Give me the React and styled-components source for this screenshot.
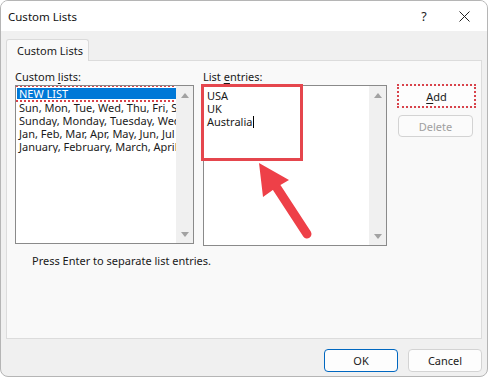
import React from "react";
import styled, { createGlobalStyle } from "styled-components";

const GlobalStyle = createGlobalStyle`
  html, body {
    margin: 0;
    padding: 0;
    background: #ffffff;
  }
  body {
    font-family: "Noto Sans", "Open Sans", sans-serif;
    font-size: 11px;
    color: #1a1a1a;
  }
`;

const Window = styled.div`
  position: relative;
  width: 488px;
  height: 377px;
  box-sizing: border-box;
  border: 1px solid #b5b5b5;
  border-radius: 8px;
  overflow: hidden;
  display: flex;
  flex-direction: column;
  background: #f0f0f0;
`;

const TitleBar = styled.div`
  height: 30px;
  flex: none;
  background: #ffffff;
  display: flex;
  align-items: center;
  padding: 0 0 0 7px;
`;

const Title = styled.div`
  flex: 1;
  font-size: 11.5px;
  color: #111;
`;

const TitleButton = styled.div`
  width: ${(p) => p.w}px;
  height: 30px;
  display: flex;
  align-items: center;
  justify-content: center;
  font-size: 12.5px;
  color: #222;
`;

const Body = styled.div`
  flex: 1;
  display: flex;
  flex-direction: column;
  padding: 8px 5px 0 5px;
`;

const TabStrip = styled.div`
  display: flex;
  height: 21px;
`;

const Tab = styled.div`
  box-sizing: border-box;
  width: 83px;
  height: 22px;
  padding: 3px 0 0 10px;
  background: #f9f9f9;
  border: 1px solid #dadada;
  border-bottom: none;
  border-radius: 3px 3px 0 0;
  position: relative;
  z-index: 1;
`;

const Panel = styled.div`
  box-sizing: border-box;
  height: 279px;
  background: #f9f9f9;
  border: 1px solid #dcdcdc;
  padding: 8px 0 0 8px;
  display: flex;
  flex-direction: column;
`;

const Columns = styled.div`
  display: flex;
  align-items: flex-start;
`;

const Column = styled.div`
  width: ${(p) => p.w}px;
  margin-right: ${(p) => p.gap || 0}px;
  display: flex;
  flex-direction: column;
`;

const Label = styled.div`
  height: 16px;
  line-height: 16px;
  color: #1a1a1a;
`;

const Underline = styled.span`
  text-decoration: underline;
  text-underline-offset: 2px;
`;

const ListBox = styled.div`
  position: relative;
  box-sizing: border-box;
  height: ${(p) => p.h}px;
  background: #ffffff;
  border: 1px solid #8a8a8a;
  display: flex;
`;

const ListContent = styled.div`
  flex: 1;
  min-width: 0;
  padding: ${(p) => p.pad};
  overflow: hidden;
`;

const Row = styled.div`
  height: 13px;
  line-height: 13px;
  white-space: nowrap;
  overflow: hidden;
  padding-left: 2px;
  color: ${(p) => (p.selected ? "#ffffff" : "#1a1a1a")};
  background: ${(p) => (p.selected ? "#0078d7" : "transparent")};
  position: relative;
`;

const SelectedRow = styled(Row)`
  overflow: visible;
  height: 11px;
  line-height: 11px;
  margin-bottom: 2px;
  &::after {
    content: "";
    position: absolute;
    left: -5px;
    right: -2px;
    top: -3px;
    bottom: -3px;
    border: 2px dotted #d8434b;
  }
`;

const EntryRow = styled.div`
  height: 13px;
  line-height: 13px;
  display: flex;
  align-items: center;
`;

const Caret = styled.span`
  display: inline-block;
  width: 1px;
  height: 12px;
  background: #000;
  margin-left: 1px;
`;

const Scrollbar = styled.div`
  width: 17px;
  flex: none;
  background: #f0f0f0;
  display: flex;
  flex-direction: column;
  justify-content: space-between;
  align-items: center;
  padding: 7px 0 6px;
`;

const ArrowUp = styled.div`
  width: 0;
  height: 0;
  border-left: 4px solid transparent;
  border-right: 4px solid transparent;
  border-bottom: 5px solid #a2a2a2;
`;

const ArrowDown = styled.div`
  width: 0;
  height: 0;
  border-left: 4px solid transparent;
  border-right: 4px solid transparent;
  border-top: 5px solid #a2a2a2;
`;

const Highlight = styled.div`
  position: absolute;
  left: -3px;
  top: -2px;
  width: 102px;
  height: 77px;
  box-sizing: border-box;
  border: 3px solid #e5464d;
  pointer-events: none;
`;

const ButtonStack = styled.div`
  display: flex;
  flex-direction: column;
  gap: 7px;
  padding-top: 15px;
`;

const DottedFrame = styled.div`
  box-sizing: border-box;
  width: 79px;
  height: 24px;
  border: 2px dotted #d8434b;
  display: flex;
`;

const Button = styled.button`
  box-sizing: border-box;
  width: ${(p) => p.w}px;
  height: ${(p) => p.h}px;
  margin-left: ${(p) => p.ml || 0}px;
  font-family: inherit;
  font-size: 11px;
  border-radius: 4px;
  padding: 0;
  cursor: default;
  background: ${(p) => (p.disabled ? "#fbfbfb" : "#fdfdfd")};
  color: ${(p) => (p.disabled ? "#a0a0a0" : "#1a1a1a")};
  border: 1px solid
    ${(p) => (p.primary ? "#0067c0" : p.bare ? "transparent" : "#d3d3d3")};
`;

const Hint = styled.div`
  margin-top: 7px;
  padding-left: 17px;
  line-height: 16px;
`;

const Footer = styled.div`
  display: flex;
  justify-content: flex-end;
  gap: 10px;
  padding: 10px 0 0;
`;

const ArrowSvg = styled.svg`
  position: absolute;
  left: 0;
  top: 0;
  pointer-events: none;
`;

const customLists = [
  "Sun, Mon, Tue, Wed, Thu, Fri, Sat",
  "Sunday, Monday, Tuesday, Wednesday",
  "Jan, Feb, Mar, Apr, May, Jun, Jul",
  "January, February, March, April",
];

export default function App() {
  return (
    <>
      <GlobalStyle />
      <Window>
        <TitleBar>
          <Title>Custom Lists</Title>
          <TitleButton w={34}>?</TitleButton>
          <TitleButton w={46}>
            <svg width="11" height="11" viewBox="0 0 11 11">
              <path d="M0.5 0.5 L10.5 10.5 M10.5 0.5 L0.5 10.5" stroke="#222" strokeWidth="1" />
            </svg>
          </TitleButton>
        </TitleBar>
        <Body>
          <TabStrip>
            <Tab>Custom Lists</Tab>
          </TabStrip>
          <Panel>
            <Columns>
              <Column w={179} gap={9}>
                <Label>
                  Custom <Underline>l</Underline>ists:
                </Label>
                <ListBox h={159}>
                  <ListContent pad="2px 0 0 1px">
                    <SelectedRow selected>NEW LIST</SelectedRow>
                    {customLists.map((l) => (
                      <Row key={l}>{l}</Row>
                    ))}
                  </ListContent>
                  <Scrollbar>
                    <ArrowUp />
                    <ArrowDown />
                  </Scrollbar>
                </ListBox>
              </Column>
              <Column w={184} gap={10}>
                <Label>
                  List <Underline>e</Underline>ntries:
                </Label>
                <ListBox h={161}>
                  <ListContent pad="3px 0 0 3px">
                    <EntryRow>USA</EntryRow>
                    <EntryRow>UK</EntryRow>
                    <EntryRow>
                      Australia
                      <Caret />
                    </EntryRow>
                  </ListContent>
                  <Scrollbar>
                    <ArrowUp />
                    <ArrowDown />
                  </Scrollbar>
                  <Highlight />
                </ListBox>
              </Column>
              <Column w={79}>
                <ButtonStack>
                  <DottedFrame>
                    <Button w={75} h={20} bare>
                      <Underline>A</Underline>dd
                    </Button>
                  </DottedFrame>
                  <Button w={75} h={22} ml={1} disabled>
                    Delete
                  </Button>
                </ButtonStack>
              </Column>
            </Columns>
            <Hint>Press Enter to separate list entries.</Hint>
          </Panel>
          <Footer>
            <Button w={74} h={23} primary>
              OK
            </Button>
            <Button w={74} h={23}>
              Cancel
            </Button>
          </Footer>
        </Body>
        <ArrowSvg width="488" height="377" viewBox="0 0 488 377">
          <line
            x1="276"
            y1="187"
            x2="306"
            y2="233"
            stroke="#ee4048"
            strokeWidth="9"
            strokeLinecap="round"
          />
          <path d="M258 162 L288 179 L276 186 L262 196 Z" fill="#ee4048" />
        </ArrowSvg>
      </Window>
    </>
  );
}
